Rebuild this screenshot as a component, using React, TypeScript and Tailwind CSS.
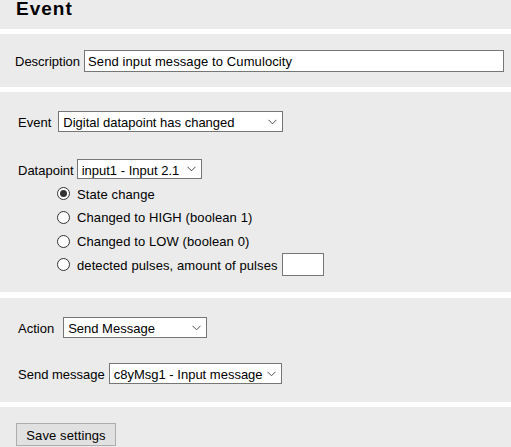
import React from "react";

function Chevron() {
  return (
    <svg width="9" height="6" viewBox="0 0 9 6" className="shrink-0">
      <path d="M0.5 0.8 L4.5 4.8 L8.5 0.8" fill="none" stroke="#4d4d4d" strokeWidth="1" />
    </svg>
  );
}

function FakeSelect({ text, className }: { text: string; className: string }) {
  return (
    <div
      className={
        "flex items-center justify-between border border-[#767676] bg-white pl-[4px] pr-[5px] text-[13px] leading-none text-black " +
        className
      }
    >
      <span className="whitespace-nowrap pt-[2px]">{text}</span>
      <Chevron />
    </div>
  );
}

function Radio({ checked, label, children, h }: { checked?: boolean; label: string; children?: React.ReactNode; h: string }) {
  return (
    <div className={"flex items-center pl-[57px] " + h}>
      <span className="flex h-[13px] w-[13px] items-center justify-center rounded-full border border-[#333333] bg-white">
        {checked && <span className="h-[7px] w-[7px] rounded-full bg-[#333333]" />}
      </span>
      <span className="ml-[7px] whitespace-nowrap pt-[2px] tracking-[0.1px]">{label}</span>
      {children}
    </div>
  );
}

export default function App() {
  return (
    <div className="h-[447px] w-[511px] overflow-hidden bg-white text-[13px] text-black" style={{ fontFamily: '"Liberation Sans", Arial, sans-serif' }}>
      <div className="h-[30px] bg-[#ebebeb] pl-[16px]">
        <h1 className="text-[19px] font-bold leading-[20px] tracking-[1px] mt-[-1px]">Event</h1>
      </div>

      <div className="mt-[5px] flex h-[53px] items-center bg-[#ebebeb] pl-[15px]">
        <span className="pt-[3px]">Description</span>
        <div className="ml-[4px] flex h-[22px] w-[420px] items-center border border-[#767676] bg-white pl-[3px]">
          <span className="pt-[3px] tracking-[0.1px]">Send input message to Cumulocity</span>
        </div>
      </div>

      <div className="mt-[5px] h-[200px] bg-[#ebebeb] pl-[18px] pt-[19px]">
        <div className="flex h-[21px] items-center">
          <span className="pt-[3px]">Event</span>
          <FakeSelect text="Digital datapoint has changed" className="ml-[7px] h-[21px] w-[225px]" />
        </div>
        <div className="mt-[27px] flex h-[20px] items-center">
          <span className="pt-[3px]">Datapoint</span>
          <FakeSelect text="input1 - Input 2.1" className="ml-[3px] h-[20px] w-[125px]" />
        </div>
        <div className="-ml-[18px] mt-[3px]">
          <Radio checked label="State change" h="h-[23px]" />
          <Radio label="Changed to HIGH (boolean 1)" h="h-[24px]" />
          <Radio label="Changed to LOW (boolean 0)" h="h-[24px]" />
          <Radio label="detected pulses, amount of pulses" h="h-[23px]">
            <div className="ml-[4px] h-[23px] w-[42px] border border-[#767676] bg-white" />
          </Radio>
        </div>
      </div>

      <div className="mt-[6px] h-[104px] bg-[#ebebeb] pl-[18px] pt-[19px]">
        <div className="flex h-[21px] items-center">
          <span className="pt-[3px]">Action</span>
          <FakeSelect text="Send Message" className="ml-[9px] h-[21px] w-[144px]" />
        </div>
        <div className="mt-[25px] flex h-[21px] items-center">
          <span className="pt-[3px]">Send message</span>
          <FakeSelect text="c8yMsg1 - Input message" className="ml-[4px] h-[21px] w-[173px]" />
        </div>
      </div>

      <div className="mt-[5px] h-[60px] bg-[#ebebeb] pl-[16px] pt-[16px]">
        <button className="flex h-[23px] w-[100px] items-center justify-center border border-[#adadad] bg-[#e1e1e1] text-[13px] text-black">
          <span className="pt-[2px] tracking-[0.1px]">Save settings</span>
        </button>
      </div>
    </div>
  );
}
